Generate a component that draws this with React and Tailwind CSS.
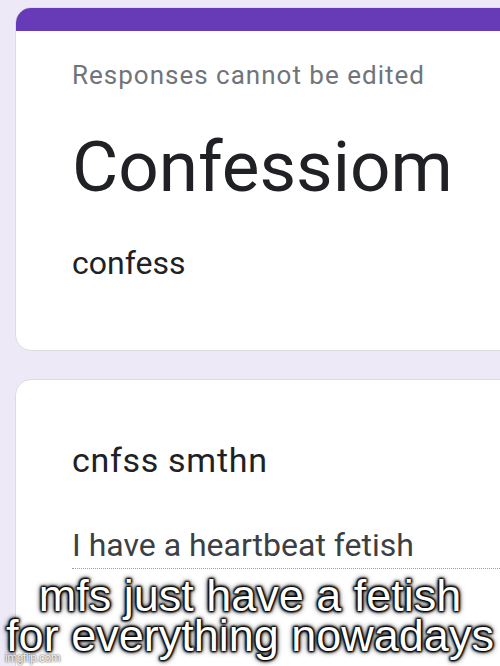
import React from "react";

const roboto = { fontFamily: "Roboto, 'Noto Sans', sans-serif" };
const arial = { fontFamily: "'Liberation Sans', Arial, sans-serif" };

const App = () => {
  return (
    <div
      className="relative h-[666px] w-[500px] overflow-hidden bg-[#ede9f7]"
      style={roboto}
    >
      {/* header card */}
      <div className="ml-[15px] mt-[7px] w-[520px] overflow-hidden rounded-[16px] border border-[#dadce0] bg-white">
        <div className="h-[23px] bg-[#673ab7]" />
        <div className="h-[319px] pl-[56px] pt-[31px]">
          <div className="text-[26px] leading-none tracking-[1px] text-[#70757a]">
            Responses cannot be edited
          </div>
          <div className="mt-[43px] text-[71px] leading-none text-[#202124]">
            Confessiom
          </div>
          <div className="mt-[45px] text-[32px] leading-none text-[#202124]">
            confess
          </div>
        </div>
      </div>

      {/* question card */}
      <div className="ml-[15px] mt-[28px] h-[320px] w-[520px] rounded-[16px] border border-[#dadce0] bg-white pl-[56px]">
        <div className="pt-[63px] text-[34px] leading-none tracking-[0.7px] text-[#202124]">
          cnfss smthn
        </div>
        <div className="mt-[52px] border-b border-dotted border-[#9aa0a6] pb-[7px] text-[32px] leading-none text-[#3c4043]">
          I have a heartbeat fetish
        </div>
      </div>

      {/* meme caption */}
      <div
        className="absolute inset-x-0 bottom-[10px] text-center text-[45px] leading-[40px] text-white [text-shadow:1px_1px_2px_#000,-1px_-1px_2px_#000,1px_-1px_2px_#000,-1px_1px_2px_#000,0_0_4px_#000,0_0_6px_#000]"
        style={arial}
      >
        <div className="whitespace-nowrap">mfs just have a fetish</div>
        <div className="whitespace-nowrap">for everything nowadays</div>
      </div>

      <div
        className="absolute bottom-[2px] left-[5px] text-[12px] leading-none tracking-[-0.5px] text-white/90 [text-shadow:0_0_2px_#000]"
        style={arial}
      >
        imgflip.com
      </div>
    </div>
  );
};

export default App;
